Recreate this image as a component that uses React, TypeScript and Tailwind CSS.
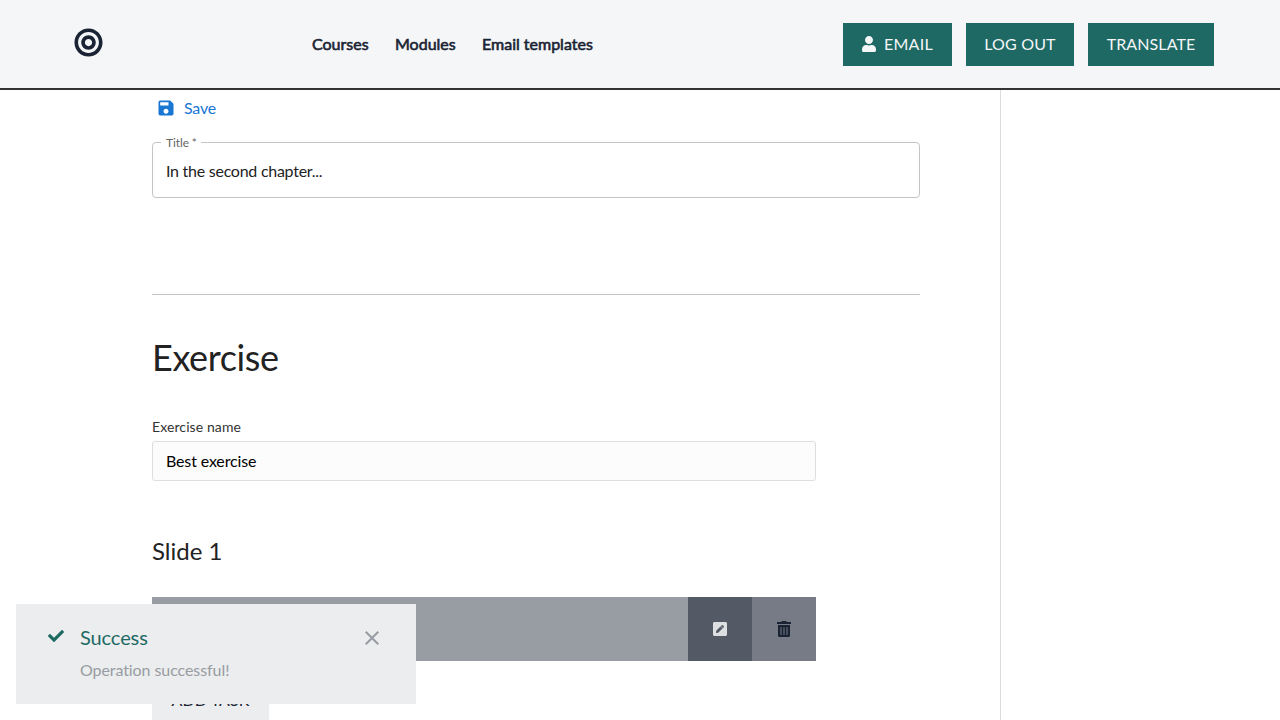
import { FaBullseye, FaCheck, FaPenSquare, FaTrashAlt, FaUser } from "react-icons/fa";
import { MdClose, MdSave } from "react-icons/md";

function Header() {
  return (
    <header className="flex h-[90px] shrink-0 items-center border-b-2 border-[#333333] bg-[#f5f6f8] text-[#1a2333]">
      <div className="ml-[74px] w-[238px] pb-[3px]">
        <FaBullseye className="block size-[29px]" />
      </div>
      <nav className="flex gap-[26px] font-normal [-webkit-text-stroke:0.6px_#1a2333]">
        <a className="w-[57px]">Courses</a>
        <a className="w-[61px]">Modules</a>
        <a className="whitespace-nowrap">Email templates</a>
      </nav>
      <div className="mr-[66px] ml-auto flex gap-[14px] text-[#f5f6f8]">
        <button className="flex h-[43px] w-[109px] items-center justify-center gap-2 bg-[#1f6964] tracking-[0.02em]">
          <FaUser className="h-4 w-[14px]" />
          EMAIL
        </button>
        <button className="h-[43px] w-[108px] bg-[#1f6964] tracking-[0.01em]">LOG OUT</button>
        <button className="h-[43px] w-[126px] bg-[#1f6964] tracking-[0.005em]">TRANSLATE</button>
      </div>
    </header>
  );
}

function Toast() {
  return (
    <div className="absolute top-[604px] left-4 flex h-[100px] w-[400px] bg-[#ebedee] pt-[21px] pl-8">
      <FaCheck className="mt-[3px] size-4 text-[#1f6964]" />
      <div className="ml-4 flex-1">
        <div className="text-xl leading-6 tracking-[-0.1px] text-[#1f6964]">Success</div>
        <div className="mt-[9px] text-base leading-6 tracking-[-0.08px] text-[#989ca3]">Operation successful!</div>
      </div>
      <MdClose className="mt-px mr-8 size-6 text-[#989ca3]" />
    </div>
  );
}

export default function App() {
  return (
    <div className="relative flex h-screen flex-col overflow-hidden bg-white font-['Lato',sans-serif] text-base leading-6 text-[#1a2333] [font-variant-ligatures:none]">
      <Header />
      <main className="flex h-[630px] w-[1001px] flex-col border-r border-[#dcdcdc] pr-20 pl-[152px] text-[#222222]">
        <button className="mt-[6px] ml-1 flex h-6 w-fit items-center gap-2 tracking-[-0.2px] text-[#1976d2]">
          <MdSave className="size-5" />
          Save
        </button>
        <fieldset className="mt-[16px] h-[62px] w-[768px] shrink-0 rounded-[4px] border border-[#c4c4c4] px-2">
          <legend className="h-3 pr-1 pl-[5px] text-xs leading-[14px] tracking-[-0.1px] text-[#666666]">Title *</legend>
          <div className="pt-[11px] pl-[5px] leading-6 tracking-[-0.26px]">In the second chapter...</div>
        </fieldset>
        <hr className="mt-24 w-[768px] border-[#c4c4c4]" />
        <h1 className="mt-[39px] text-4xl leading-[47px] tracking-[-0.4px]">Exercise</h1>
        <label className="mt-9 text-sm leading-5 tracking-[0.1px] text-[#333333]">Exercise name</label>
        <div className="mt-1 flex h-10 w-[664px] shrink-0 items-center rounded-[3px] border border-[#dedede] bg-[#fcfcfc] px-[13px] tracking-[-0.15px] text-black">
          Best exercise
        </div>
        <h2 className="mt-[54px] text-2xl leading-8">Slide 1</h2>
        <div className="mt-[30px] flex h-16 w-[664px] shrink-0">
          <div className="flex-1 bg-[#989ca3]" />
          <button className="flex w-16 items-center justify-center bg-[#535a66] text-[#dedfe0]">
            <FaPenSquare className="size-4" />
          </button>
          <button className="flex w-16 items-center justify-center bg-[#767b85] text-[#1a2333]">
            <FaTrashAlt className="size-4" />
          </button>
        </div>
        <button className="mt-[19px] h-[43px] w-[117px] shrink-0 bg-[#ebedee] pb-[3px] tracking-[0.005em] text-[#1a2333]">
          ADD TASK
        </button>
      </main>
      <Toast />
    </div>
  );
}
